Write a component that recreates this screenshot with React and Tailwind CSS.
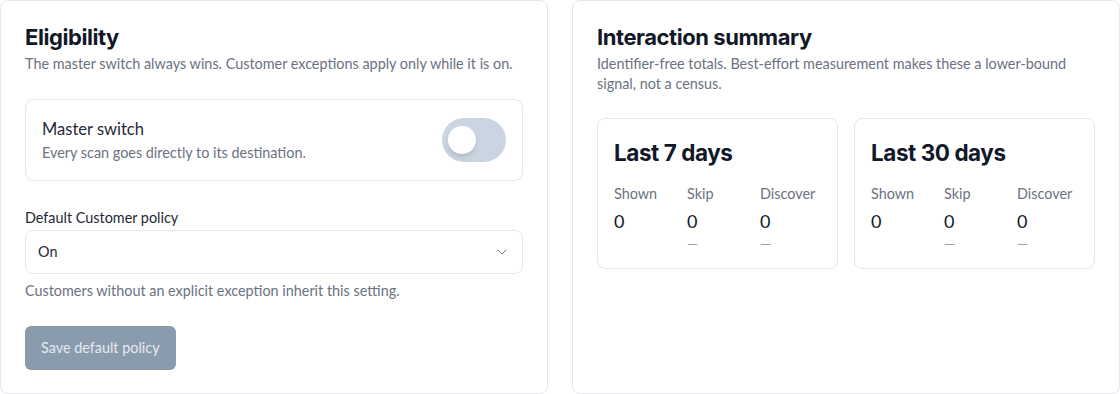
import { ChevronDown } from "lucide-react";

const body = { fontFamily: "Lato, 'Noto Sans', sans-serif" };
const head = { fontFamily: "Inter, 'Noto Sans', sans-serif" };

function Stat({ title }) {
  const cols = [
    { label: "Shown", value: "0", dash: false },
    { label: "Skip", value: "0", dash: true },
    { label: "Discover", value: "0", dash: true },
  ];
  return (
    <div className="rounded-lg border border-[#e5e7eb] p-4 pb-[16px]">
      <h3 className="text-[22.5px] leading-7 font-bold tracking-[-0.02em] text-[#111827] mt-[4px]" style={head}>
        {title}
      </h3>
      <div className="grid grid-cols-3 gap-x-3 mt-[17px]">
        {cols.map((c) => (
          <div key={c.label} className="flex flex-col">
            <span className="text-[14.4px] leading-5 text-[#6b7280]">{c.label}</span>
            <span className="text-lg leading-6 text-[#111827] mt-[5px]">{c.value}</span>
            <span className="text-sm leading-4 text-[#9ca3af] h-4 mt-[3px]">{c.dash ? "—" : ""}</span>
          </div>
        ))}
      </div>
    </div>
  );
}

export default function App() {
  return (
    <div className="grid grid-cols-2 gap-6 bg-white h-[394px]" style={body}>
      <div className="rounded-lg border border-[#e5e7eb] px-6 pt-6 pb-6 h-[394px]">
        <h2 className="text-[22px] leading-7 font-bold tracking-[-0.02em] text-[#111827] -mt-[2px]" style={head}>
          Eligibility
        </h2>
        <p className="text-[14.4px] leading-5 text-[#6b7280] mt-[3px]">
          The master switch always wins. Customer exceptions apply only while it is on.
        </p>

        <div className="mt-[25px] rounded-lg border border-[#e5e7eb] flex items-center justify-between pl-4 pr-4 h-[82px]">
          <div>
            <div className="text-[16.5px] leading-6 text-[#1f2937]">Master switch</div>
            <div className="text-[14.4px] leading-5 text-[#6b7280] mt-[2px]">
              Every scan goes directly to its destination.
            </div>
          </div>
          <button className="w-16 h-[44px] rounded-full bg-[#cbd5e1] flex items-center pl-[6px]">
            <span className="w-7 h-7 rounded-full bg-white shadow-md block" />
          </button>
        </div>

        <label className="block text-[14.4px] leading-5 text-[#1f2937] mt-[27px]">Default Customer policy</label>
        <div className="mt-[2px] h-[44px] rounded-lg border border-[#e5e7eb] flex items-center justify-between px-3">
          <span className="text-[14.4px] text-[#1f2937]">On</span>
          <ChevronDown className="w-4 h-4 text-[#6b7280]" strokeWidth={1.5} />
        </div>
        <p className="text-[14.4px] leading-5 text-[#6b7280] mt-[7px]">
          Customers without an explicit exception inherit this setting.
        </p>

        <button className="mt-[25px] h-[44px] px-4 rounded-md bg-[#8b9bae] text-[14.4px] text-[#e5e9ef]">
          Save default policy
        </button>
      </div>

      <div className="rounded-lg border border-[#e5e7eb] px-6 pt-6 pb-6 h-[394px]">
        <h2 className="text-[22px] leading-7 font-bold tracking-[-0.02em] text-[#111827] -mt-[2px]" style={head}>
          Interaction summary
        </h2>
        <p className="text-[14.4px] leading-5 text-[#6b7280] mt-[3px]">
          Identifier-free totals. Best-effort measurement makes these a lower-bound signal, not a census.
        </p>
        <div className="grid grid-cols-2 gap-4 mt-[24px]">
          <Stat title="Last 7 days" />
          <Stat title="Last 30 days" />
        </div>
      </div>
    </div>
  );
}
